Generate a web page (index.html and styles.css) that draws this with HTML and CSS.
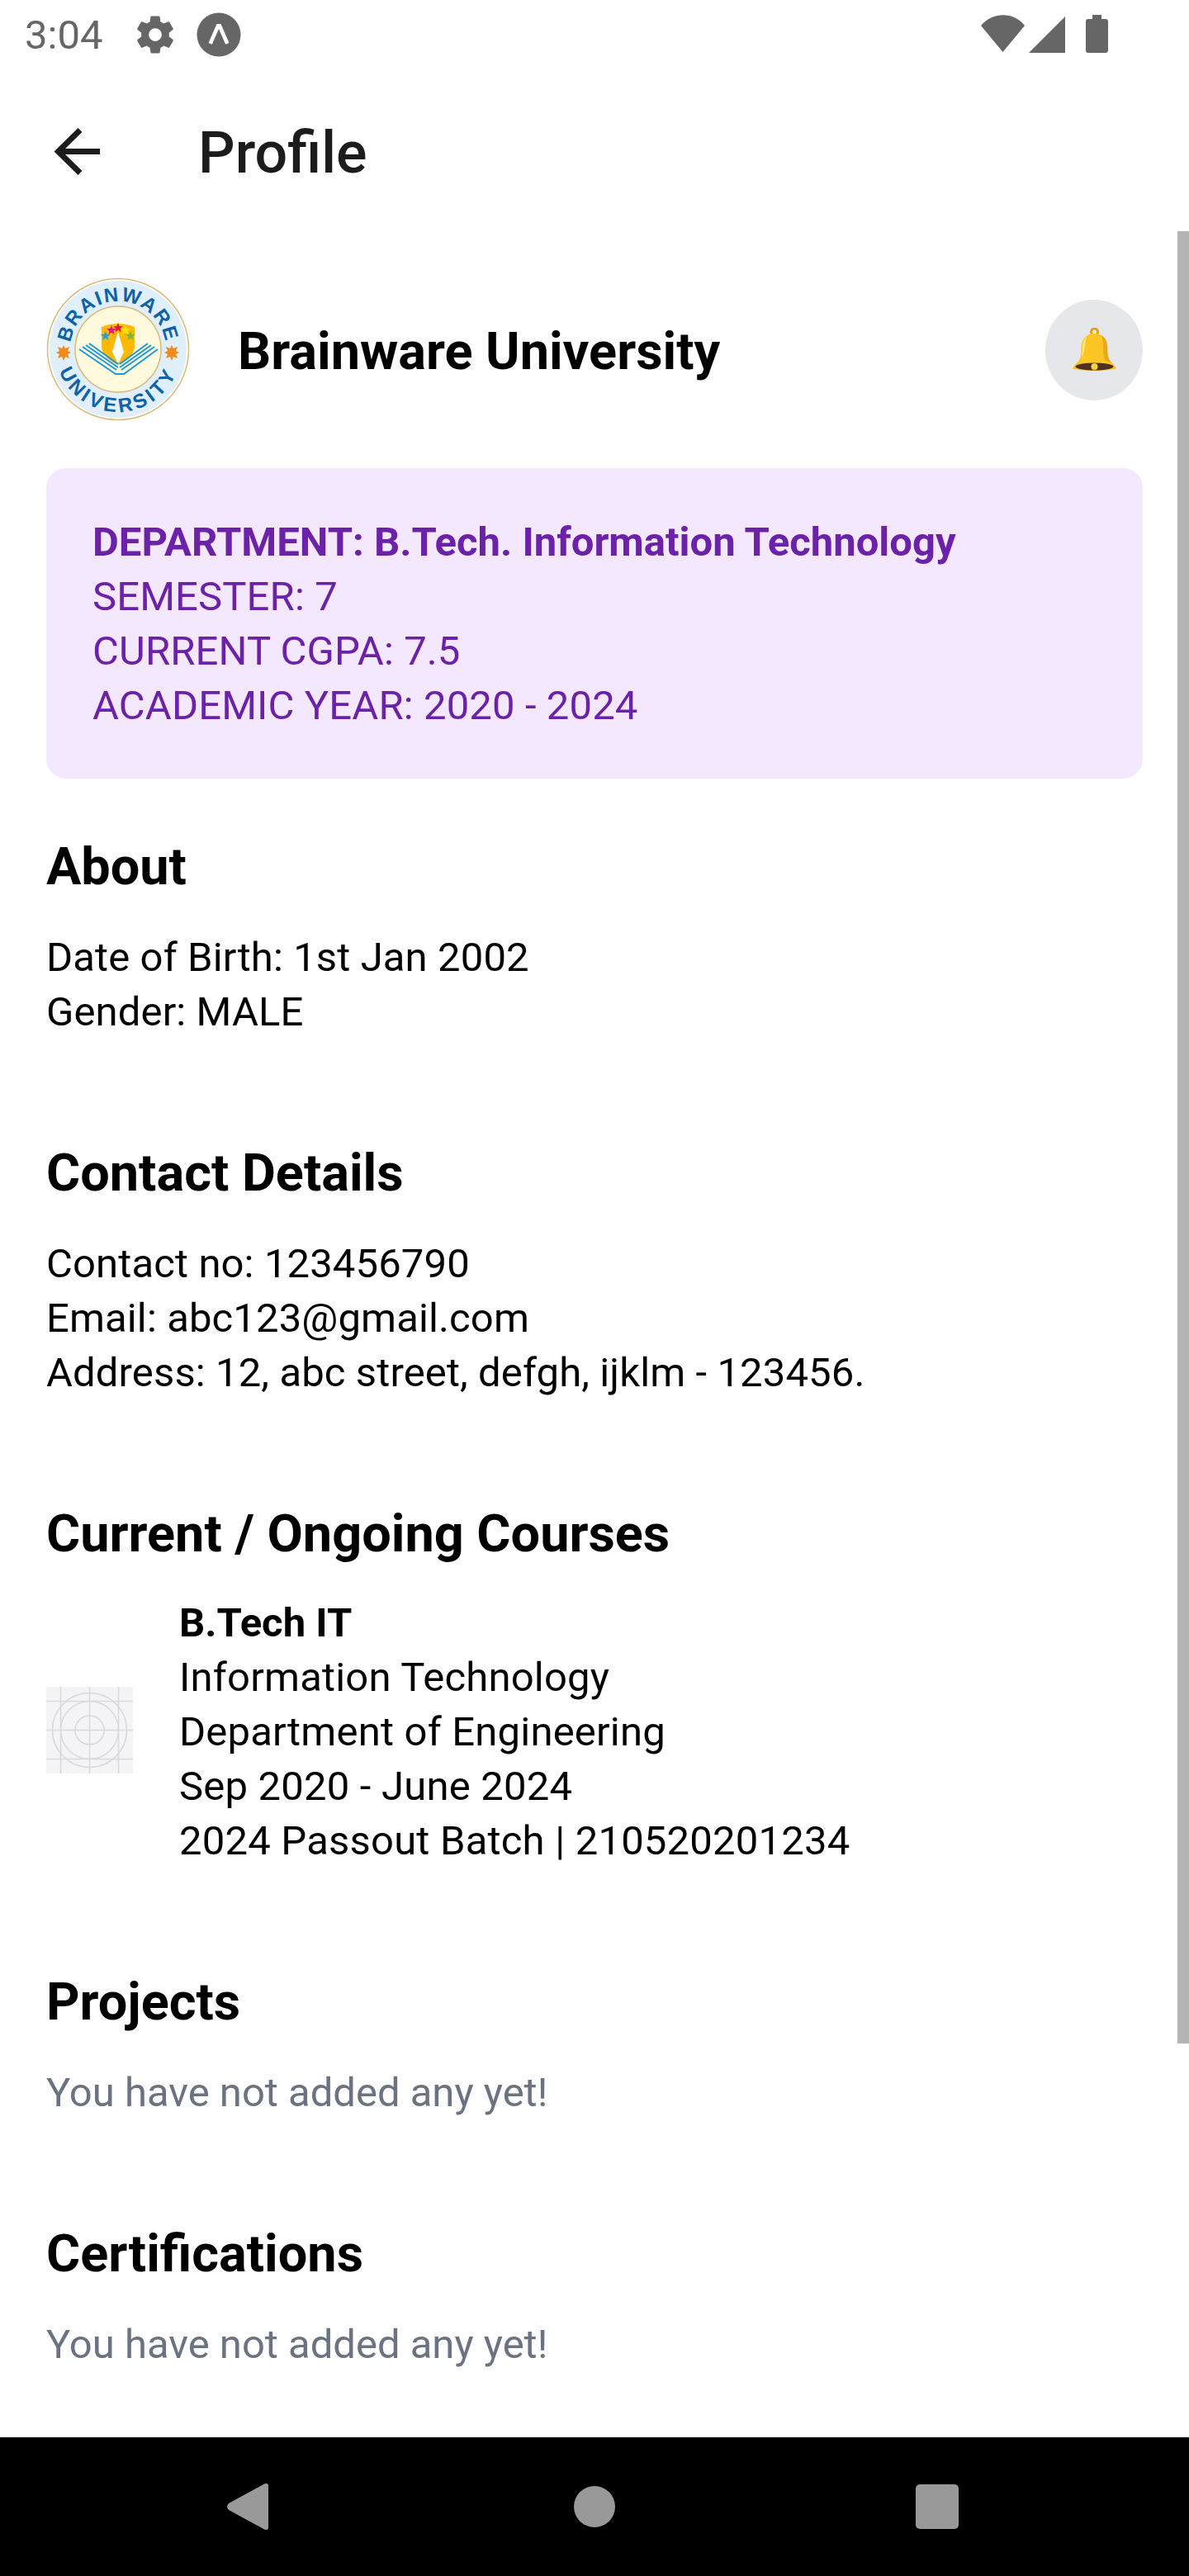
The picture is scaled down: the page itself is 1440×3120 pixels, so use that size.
FILE: index.html
```html
<!DOCTYPE html>
<html lang="en">
<head>
    <meta charset="UTF-8">
    <meta name="viewport" content="width=device-width, initial-scale=1.0">
    <title>Profile</title>
    <link rel="stylesheet" href="styles.css">
</head>
<body>
    <div class="status-bar">
        <span class="time">3:04</span>
        <svg class="status-gear" viewBox="0 0 24 24"><path fill="#666" d="M19.4 13c.04-.32.07-.66.07-1s-.03-.68-.07-1l2.1-1.65c.2-.15.25-.42.12-.64l-2-3.46c-.12-.22-.38-.3-.61-.22l-2.49 1c-.52-.4-1.08-.73-1.69-.98l-.38-2.65A.49.49 0 0 0 14 2h-4c-.25 0-.46.18-.49.42l-.38 2.65c-.61.25-1.17.59-1.69.98l-2.49-1a.5.5 0 0 0-.61.22l-2 3.46c-.13.22-.07.49.12.64L4.57 11c-.04.32-.07.66-.07 1s.03.68.07 1l-2.11 1.65c-.19.15-.25.42-.12.64l2 3.46c.12.22.39.3.61.22l2.49-1c.52.4 1.08.73 1.69.98l.38 2.65c.03.24.24.42.49.42h4c.25 0 .46-.18.49-.42l.38-2.65c.61-.25 1.17-.59 1.69-.98l2.49 1c.23.08.49 0 .61-.22l2-3.46c.12-.22.07-.49-.12-.64L19.4 13zM12 15.5a3.5 3.5 0 1 1 0-7 3.5 3.5 0 0 1 0 7z"/></svg>
        <svg class="status-expo" viewBox="0 0 54 54"><circle cx="27" cy="27" r="26.5" fill="#666"/><path fill="#fff" d="M24.5 14h5l10 23-4.300 1.800L27 20 18.800 38.800 14.500 37z"/></svg>
        <div class="status-right">
            <svg class="status-wifi" viewBox="0 0 54 46"><path fill="#666" d="M0 13C14 -4 40 -4 53 13L26.500 45z"/></svg>
            <svg class="status-signal" viewBox="0 0 44 44"><path fill="#666" d="M44 0V44H0z"/></svg>
            <svg class="status-battery" viewBox="0 0 27 46"><path fill="#666" d="M8 0h11v5h5a3 3 0 0 1 3 3v35a3 3 0 0 1-3 3H3a3 3 0 0 1-3-3V8a3 3 0 0 1 3-3h5z"/></svg>
        </div>
    </div>

    <header class="app-bar">
        <svg class="back-icon" viewBox="0 0 57 57"><path fill="none" stroke="#1c1c1e" stroke-width="7" d="M57 28.500H6M33 2.500L6.500 28.500 33 54.500"/></svg>
        <h1 class="app-title">Profile</h1>
    </header>

    <main class="content">
        <div class="scrollbar"></div>

        <div class="uni-row">
            <svg class="uni-logo" viewBox="0 0 174 174">
                <defs>
                    <path id="arc-top" d="M32.500 106.800A58 58 0 1 1 141.500 106.800"/>
                    <path id="arc-bottom" d="M11 87A76 76 0 0 0 163 87"/>
                    <path id="star" d="M0-6l1.600 4 4.300.2-3.300 2.800 1.100 4.200L0 2.800-3.700 5.200l1.100-4.200-3.300-2.800 4.300-.2z"/>
                </defs>
                <circle cx="87" cy="87" r="85.500" fill="#fff" stroke="#dcb878" stroke-width="1.500"/>
                <circle cx="87" cy="87" r="83" fill="#dfeffc"/>
                <circle cx="87" cy="87" r="52" fill="#fff9dd" stroke="#dcb878" stroke-width="1.500"/>
                <text class="logo-text"><textPath href="#arc-top" startOffset="50%" text-anchor="middle">BRAINWARE</textPath></text>
                <text class="logo-text logo-text-low"><textPath href="#arc-bottom" startOffset="50%" text-anchor="middle">UNIVERSITY</textPath></text>
                <path transform="translate(1 3)" fill="#f08a1c" d="M20 79l2 4 5-2-2 5 4 2-4 2 2 5-5-2-2 5-2-5-5 2 2-5-4-2 4-2-2-5 5 2zM151 79l2 4 5-2-2 5 4 2-4 2 2 5-5-2-2 5-2-5-5 2 2-5-4-2 4-2-2-5 5 2z"/>
                <path fill="#ffb900" d="M67 60q20-8 40 0V85q-2 13-20 21-18-8-20-21z"/>
                <path fill="#fff" d="M87 66l7 24-6 13h-2l-6-13z"/>
                <path fill="none" stroke="#1b9ad6" stroke-width="2" d="M40 87L84 117H94L135 87M44 84L85 112M48 82L87 109M52 80L87 105M131 84L91 112M127 82L89 109M123 80L89 105"/>
                <use href="#star" x="71.700" y="70.700" fill="#19a4e0"/>
                <use href="#star" x="79" y="64" fill="#e0197d"/>
                <use href="#star" x="87" y="61" fill="#e0193a"/>
                <use href="#star" x="95.700" y="64" fill="#ffe600"/>
                <use href="#star" x="102" y="70.700" fill="#7ab833"/>
            </svg>
            <h2 class="uni-name">Brainware University</h2>
            <div class="bell-btn">
                <svg class="bell-icon" viewBox="0 0 55 54">
                    <circle cx="27.500" cy="5" r="4" fill="none" stroke="#dfa50f" stroke-width="3"/>
                    <path fill="#fdc624" d="M27.500 7c-10 0-16 7-16 17 0 10-1 15-6 19l-5 6c7 4 47 4 54 0l-5-6c-5-4-6-9-6-19 0-10-6-17-16-17z"/>
                    <path fill="#e5ab10" d="M36 9c5 3 7 8 7 15 0 10 1 14 5 18l-7-2c-3-6-3-14-3-20 0-4-1-8-2-11z"/>
                    <path fill="#ffe680" d="M18 10c-3 3-5 8-5 14l-1 12c4-5 4-20 6-26z"/>
                    <ellipse cx="27.500" cy="47" rx="23" ry="4.500" fill="#503024"/>
                    <circle cx="27.500" cy="47" r="4" fill="#f6d23d"/>
                </svg>
            </div>
        </div>

        <div class="dept-card">
            <p class="dept-title">DEPARTMENT: B.Tech. Information Technology</p>
            <p>SEMESTER: 7</p>
            <p>CURRENT CGPA: 7.5</p>
            <p>ACADEMIC YEAR: 2020 - 2024</p>
        </div>

        <section class="section">
            <h3>About</h3>
            <p>Date of Birth: 1st Jan 2002</p>
            <p>Gender: MALE</p>
        </section>

        <section class="section">
            <h3>Contact Details</h3>
            <p>Contact no: 123456790</p>
            <p>Email: abc123@gmail.com</p>
            <p>Address: 12, abc street, defgh, ijklm - 123456.</p>
        </section>

        <section class="section">
            <h3>Current / Ongoing Courses</h3>
            <div class="course">
                <svg class="course-img" viewBox="0 0 105 105">
                    <rect width="105" height="105" fill="#f4f4f6"/>
                    <g fill="none" stroke="#d8d8dd" stroke-width="1.500">
                        <path d="M17.500 0V105M52.500 0V105M87.500 0V105M0 17.500H105M0 52.500H105M0 87.500H105"/>
                        <circle cx="52.500" cy="52.500" r="45"/>
                        <circle cx="52.500" cy="52.500" r="35"/>
                        <circle cx="52.500" cy="52.500" r="17.500"/>
                    </g>
                </svg>
                <div class="course-info">
                    <p class="course-name">B.Tech IT</p>
                    <p>Information Technology</p>
                    <p>Department of Engineering</p>
                    <p>Sep 2020 - June 2024</p>
                    <p>2024 Passout Batch | 210520201234</p>
                </div>
            </div>
        </section>

        <section class="section">
            <h3>Projects</h3>
            <p class="empty">You have not added any yet!</p>
        </section>

        <section class="section">
            <h3>Certifications</h3>
            <p class="empty">You have not added any yet!</p>
        </section>
    </main>

    <nav class="nav-bar">
        <svg class="nav-back" viewBox="0 0 50 56"><path fill="#999" d="M46 0h2q2 0 2 3v50q0 3-2 3h-2L2 32q-4-4 0-8z"/></svg>
        <div class="nav-home"></div>
        <div class="nav-recent"></div>
    </nav>
</body>
</html>
```

FILE: styles.css
```css
body {
    font-family: Roboto, sans-serif;
    margin: 0;
    padding: 0;
    width: 1440px;
    height: 3120px;
    overflow: hidden;
    background: #fff;
    color: #000;
    display: flex;
    flex-direction: column;
}
p, h1, h2, h3 {
    margin: 0;
}

/* status bar */
.status-bar {
    height: 84px;
    flex: none;
    display: flex;
    align-items: center;
    padding: 0 30px;
    box-sizing: border-box;
}
.time {
    font-size: 49px;
    color: #666;
    width: 131px;
}
.status-gear {
    width: 54px;
    height: 54px;
}
.status-expo {
    width: 54px;
    height: 54px;
    margin-left: 23px;
}
.status-right {
    margin-left: auto;
    display: flex;
    align-items: flex-end;
    height: 46px;
    margin-right: 68px;
    margin-top: -2px;
}
.status-wifi {
    width: 54px;
    height: 46px;
}
.status-signal {
    width: 44px;
    height: 44px;
    margin-left: 4px;
}
.status-battery {
    width: 27px;
    height: 46px;
    margin-left: 25px;
}

/* app bar */
.app-bar {
    height: 196px;
    flex: none;
    display: flex;
    align-items: center;
    padding-left: 64px;
    box-sizing: border-box;
}
.back-icon {
    width: 57px;
    height: 57px;
    margin-top: 2px;
}
.app-title {
    font-size: 70px;
    font-weight: 500;
    color: #1c1c1e;
    margin-left: 119px;
    padding-top: 5px;
}

/* scrolling part */
.content {
    flex: 1;
    position: relative;
    overflow: hidden;
    background: #fefefe;
    padding: 56px 56px 0;
}
.scrollbar {
    position: absolute;
    top: 0;
    right: 0;
    width: 14px;
    height: 2195px;
    background: #b4b4b4;
}
.uni-row {
    display: flex;
    align-items: center;
    height: 174px;
}
.uni-logo {
    width: 174px;
    height: 174px;
    flex: none;
}
.logo-text {
    font-family: "Liberation Sans", sans-serif;
    font-size: 24px;
    font-weight: 700;
    letter-spacing: 2px;
    fill: #0f62a8;
}
.logo-text-low {
    letter-spacing: 4px;
}
.uni-name {
    font-size: 63px;
    font-weight: 700;
    margin-left: 58px;
    padding-top: 4px;
    flex: 1;
}
.bell-btn {
    width: 118px;
    height: 122px;
    border-radius: 50%;
    background: #e5e7eb;
    display: flex;
    align-items: center;
    justify-content: center;
    margin-top: 2px;
}
.bell-icon {
    width: 55px;
    height: 54px;
}
.dept-card {
    background: #f3e8ff;
    color: #6b21a8;
    border-radius: 24px;
    padding: 57px 56px 55px;
    margin-top: 57px;
    width: 1328px;
    box-sizing: border-box;
    font-size: 49px;
    line-height: 66px;
    letter-spacing: 0.12px;
}
.dept-title {
    font-weight: 700;
    letter-spacing: 0;
}
.section {
    font-size: 49px;
    line-height: 66px;
    letter-spacing: 0.12px;
    margin-bottom: 120px;
}
.section h3 {
    font-size: 63px;
    font-weight: 700;
    line-height: 84px;
    letter-spacing: 0;
    margin-bottom: 35px;
}
.dept-card + .section {
    margin-top: 65px;
}
.course {
    display: flex;
    align-items: center;
    gap: 56px;
    margin-top: -2px;
}
.course-img {
    width: 105px;
    height: 105px;
    flex: none;
    margin-bottom: 5px;
}
.course-info {
    letter-spacing: 0.2px;
}
.course-name {
    font-weight: 700;
    letter-spacing: 0;
}
.empty {
    color: #6b7280;
    letter-spacing: 0;
}

/* android nav */
.nav-bar {
    height: 168px;
    flex: none;
    background: #000;
    position: relative;
    display: flex;
    align-items: center;
}
.nav-back {
    width: 50px;
    height: 56px;
    margin-left: 275px;
}
.nav-home {
    width: 50px;
    height: 50px;
    border-radius: 50%;
    background: #999;
    margin-left: 370px;
}
.nav-recent {
    width: 52px;
    height: 54px;
    border-radius: 5px;
    background: #999;
    margin-left: 364px;
}
```
